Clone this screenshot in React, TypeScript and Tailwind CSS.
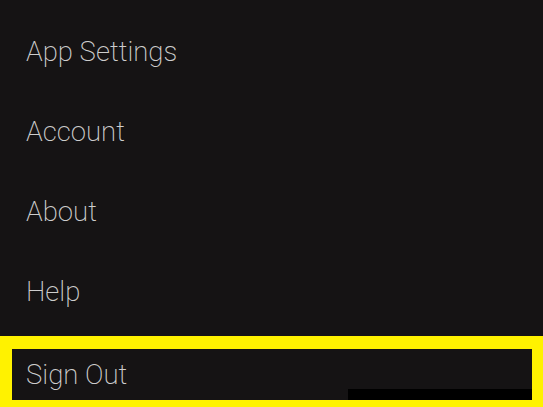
export default function App() {
    const items = ['App Settings', 'Account', 'About', 'Help']

    return (
        <div className="w-[543px] h-[407px] overflow-hidden bg-[#151314] pt-[12px]" style={{ fontFamily: 'Roboto, "Noto Sans", sans-serif' }}>
            {items.map(item => (
                <div key={item} className="h-[80px] flex items-center pl-[26px] text-[27.5px] font-extralight text-[#cdcdcd]">
                    {item}
                </div>
            ))}
            <div className="mt-[4px] border-[#fff200] border-t-[13px] border-l-[12px] border-r-[11px] border-b-[13px]">
                <div className="relative h-[51px] flex items-center pl-[14px] text-[27.5px] font-extralight text-[#cdcdcd]">
                    Sign Out
                    <div className="absolute right-0 bottom-0 w-[184px] h-[11px] bg-black" />
                </div>
            </div>
        </div>
    )
}
